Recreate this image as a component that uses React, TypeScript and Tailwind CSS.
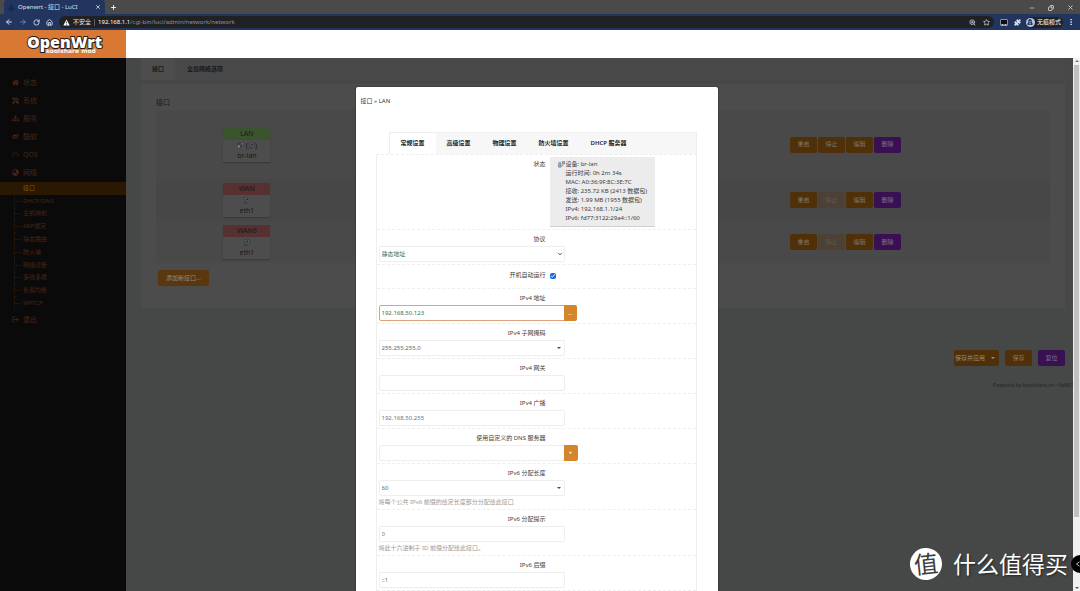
import React from "react";
import {
  ArrowLeft, ArrowRight, RotateCw, House, X, Plus, Minus, Copy, Star, ZoomIn,
  Puzzle, EllipsisVertical, ChevronDown, LogOut, Gauge,
} from "lucide-react";
import { FaHome, FaTools, FaWeibo, FaGlobeAsia, FaSitemap, FaUserSecret } from "react-icons/fa";

const menu = [
  { label: "状态", Icon: FaHome },
  { label: "系统", Icon: FaTools },
  { label: "服务", Icon: FaSitemap },
  { label: "酷软", Icon: FaWeibo },
  { label: "QOS", Icon: Gauge },
  { label: "网络", Icon: FaGlobeAsia },
];

const submenu = ["接口", "DHCP/DNS", "主机映射", "ARP绑定", "静态路由", "防火墙", "网络诊断", "多线多拨", "负载均衡", "MPTCP"];

const interfaces = [
  { name: "LAN", device: "br-lan", up: true },
  { name: "WAN", device: "eth1", up: false },
  { name: "WAN6", device: "eth1", up: false },
];

function BridgeIcon({ className = "" }: { className?: string }) {
  return (
    <svg viewBox="0 0 16 16" className={`inline-block size-[7px] ${className}`} aria-hidden="true">
      <rect x="1" y="6" width="6" height="8" rx="1" fill="#9fb0c4" stroke="currentColor" strokeWidth="1.5" />
      <rect x="10" y="1" width="5" height="6" rx="1" fill="#9fb0c4" stroke="currentColor" strokeWidth="1.5" />
      <path d="M1 3h6M8 11l4-1" stroke="currentColor" strokeWidth="1.5" />
    </svg>
  );
}

function PortIcon() {
  return (
    <svg viewBox="0 0 16 16" className="inline-block size-[7px]" aria-hidden="true">
      <rect x="4" y="1" width="11" height="10" fill="#585858" stroke="#3c3c3c" strokeWidth="1.2" />
      <path d="M1 14h9" stroke="#2c3a58" strokeWidth="2.5" />
      <path d="M3 11l5-5" stroke="#3a4456" strokeWidth="2" />
      <rect x="8" y="4" width="3" height="3" fill="#1c1c1c" />
    </svg>
  );
}

function Browser() {
  return (
    <header className="shrink-0">
      <div className="flex h-[14px] items-end justify-between bg-[#4a4a4a]">
        <div className="flex items-center">
          <div className="ml-1 flex h-[14px] w-[101px] items-center rounded-t-[3px] bg-[#22355f] pl-1 pr-1 text-[6px] text-[#dfe5f0]">
            <svg viewBox="0 0 16 16" className="mr-[3px] size-[7px]" aria-hidden="true">
              <path d="M3 9h10v4H3zM8 9V5M5 4q3-3 6 0" stroke="#111c33" strokeWidth="1.6" fill="none" />
            </svg>
            <span className="flex-1 whitespace-nowrap">Openwrt - 接口 - LuCI</span>
            <button aria-label="关闭标签页"><X className="size-[6px]" strokeWidth={3} /></button>
          </div>
          <button aria-label="新标签页" className="ml-[5px] text-white"><Plus className="size-[7px]" strokeWidth={3} /></button>
        </div>
        <div className="flex h-[13px] items-center gap-[13px] pr-[6px] text-[#e4e4e4]">
          <button aria-label="最小化"><Minus className="size-[6px]" strokeWidth={2.5} /></button>
          <button aria-label="还原"><Copy className="size-[6px] -scale-x-100" strokeWidth={3} /></button>
          <button aria-label="关闭"><X className="size-[7px]" strokeWidth={2.5} /></button>
        </div>
      </div>
      <div className="flex h-4 items-center bg-[#22355f] px-[5px] text-[#d6dced]">
        <div className="flex w-[54px] items-center gap-[6px]">
          <button aria-label="后退"><ArrowLeft className="size-[8px]" strokeWidth={3} /></button>
          <button aria-label="前进" className="text-[#71809f]"><ArrowRight className="size-[8px]" strokeWidth={3} /></button>
          <button aria-label="刷新"><RotateCw className="size-[7px]" strokeWidth={3} /></button>
          <button aria-label="主页"><House className="size-[7px]" strokeWidth={3} /></button>
        </div>
        <div className="flex h-3 flex-1 items-center rounded-full bg-[#202124] pl-1 pr-1 text-[6px]">
          <svg viewBox="0 0 12 12" className="mr-[3px] size-[7px]" aria-hidden="true">
            <path d="M6 1l5.5 10H.5z" fill="#ffffff" /><path d="M6 4.5v3M6 8.5v1.3" stroke="#202124" strokeWidth="1.3" />
          </svg>
          <span className="text-[#e8eaed]">不安全</span>
          <span className="mx-[3px] h-[7px] w-px bg-[#5c5e62]" />
          <span className="flex-1 text-[#8f9398]"><span className="text-white">192.168.1.1</span>/cgi-bin/luci/admin/network/network</span>
          <button aria-label="缩放" className="mr-[7px]"><ZoomIn className="size-[7px]" strokeWidth={2.5} /></button>
          <button aria-label="收藏"><Star className="size-[7px]" strokeWidth={2.5} /></button>
        </div>
        <svg viewBox="0 0 16 14" className="ml-[6px] h-[7px] w-2" aria-hidden="true">
          <rect x="1" y="1" width="14" height="12" rx="1" fill="#0c0f16" stroke="#aab2c2" strokeWidth="1.5" />
          <path d="M3 10h4v3H3zM9 10h4v3H9z" fill="#cbd1dc" />
        </svg>
        <Puzzle className="ml-[6px] size-[7px] fill-current" />
        <div className="ml-[5px] flex h-[11px] items-center rounded-full bg-[#202124] pr-[2px] text-[6px] text-white">
          <span className="mr-[2px] flex size-[9px] items-center justify-center rounded-full bg-[#b6c7ea] text-[#2b3c60]"><FaUserSecret className="size-[6px]" /></span>
          <span className="whitespace-nowrap">无痕模式</span>
        </div>
        <button aria-label="菜单" className="ml-1"><EllipsisVertical className="size-[8px]" strokeWidth={3} /></button>
      </div>
    </header>
  );
}

function Logo() {
  return (
    <svg viewBox="0 0 126 28" className="h-7 w-[126px]" role="img" aria-label="OpenWrt koolshare mod">
      <text x="46" y="23" fontFamily="DejaVu Sans, sans-serif" fontSize="6" fontWeight="700" fill="#fff4ea">koolshare mod</text>
      <text x="27" y="18" fontFamily="Open Sans, sans-serif" fontSize="16" fontWeight="800" fill="#ffffff" stroke="#241a14" strokeWidth="2" strokeLinejoin="round" paintOrder="stroke">OpenWrt</text>
    </svg>
  );
}

function Sidebar() {
  return (
    <nav className="w-[126px] shrink-0 bg-[#0a0a0a] pt-[15px] text-[#482716]">
      <ul className="grid h-[109px] auto-rows-fr text-[7px]">
        {menu.map(({ label, Icon }) => (
          <li key={label} className="flex">
            <a href="#" className="flex items-center pl-3"><Icon className="mr-1 size-[7px]" />{label}</a>
          </li>
        ))}
      </ul>
      <ul className="grid h-32 auto-rows-fr text-[6px]">
        {submenu.map((label, i) => (
          <li key={label} className={i === 0 ? "flex bg-[#2a1803] text-[#795e16]" : "flex"}>
            <a href="#" className="flex flex-1 items-center">
              <span className="ml-[14px] h-full w-px border-l border-dotted border-[#2c1a0c]" />
              <span className="mr-[2px] w-[6px] border-t border-dotted border-[#2c1a0c]" />
              {label}
            </a>
          </li>
        ))}
      </ul>
      <a href="#" className="flex h-[19px] items-center pl-3 text-[7px]"><LogOut className="mr-1 size-[7px]" strokeWidth={3} />退出</a>
    </nav>
  );
}

const dimButton = "h-4 w-[27px] rounded-[2px] bg-[#503009] text-[#857767]";
const dimPurple = "h-4 w-[27px] rounded-[2px] bg-[#391051] text-[#83708d]";
const dimDisabled = "h-4 w-[27px] rounded-[2px] bg-[#4c4136] text-[#64594e]";

function Background() {
  return (
    <main className="min-w-0 flex-1 bg-[#464847] pl-[15px] text-[#1a1a1a]">
      <div className="mr-2 flex h-[22px] items-center bg-[#494949] font-semibold">
        <a href="#" className="flex h-full items-center bg-[#4d4d4d] px-[11px]">接口</a>
        <a href="#" className="px-3">全局网络选项</a>
      </div>
      <section className="mr-2 mt-1 bg-[#4c4c4c] px-[15px] pb-[22px] pt-[13px]">
        <h2 className="h-[13px] text-[7px] leading-[12px]">接口</h2>
        <table className="w-full table-fixed border-collapse">
          <tbody>
            {interfaces.map(({ name, device, up }, i) => (
              <tr key={name} className={i === 1 ? "h-[42px] bg-[#474747]" : i === 0 ? "h-[69px] bg-[#494949]" : "h-[42px] bg-[#494949]"}>
                <td className="w-1/5 py-0 pl-[3px] pr-0">
                  <div className="mx-auto h-[34px] w-[47px] bg-[#4d4d4d] text-center text-[7px] shadow-[0_1px_1px_#3a3a3a]">
                    <div className={up ? "h-3 bg-[#3a552e] leading-[12px]" : "h-3 bg-[#573030] leading-[12px]"}>{name}</div>
                    <div className="flex h-[11px] items-center justify-center">
                      {up ? <><BridgeIcon className="mr-[2px] opacity-60" />(<PortIcon />)</> : <PortIcon />}
                    </div>
                    <div className="leading-[9px]">{device}</div>
                  </div>
                </td>
                <td />
                <td className="w-[260px] p-0">
                  <div className="flex gap-px">
                    <button className={dimButton}>重启</button>
                    <button className={up ? dimButton : dimDisabled} disabled={!up}>停止</button>
                    <button className={dimButton}>编辑</button>
                    <button className={dimPurple}>删除</button>
                  </div>
                </td>
              </tr>
            ))}
          </tbody>
        </table>
        <button className="ml-[2px] mt-[7px] block h-4 w-[51px] rounded-[2px] bg-[#5a370c] text-[#9a8c78]">添加新接口...</button>
      </section>
      <div className="mr-2 mt-[42px] flex justify-end gap-[6px]">
        <button className="flex h-4 w-[45px] items-center justify-between whitespace-nowrap rounded-[2px] bg-[#503009] px-[1px] pr-1 text-[#998b7a]">
          保存并应用<span className="border-x-2 border-t-2 border-x-transparent border-t-current" />
        </button>
        <button className={dimButton}>保存</button>
        <button className={dimPurple}>复位</button>
      </div>
      <footer className="mt-[15px] flex justify-end">
        <p className="whitespace-nowrap text-[5px] font-semibold leading-[9px] text-[#2c2c2c]">Powered by koolshare.cn • fw867</p>
      </footer>
    </main>
  );
}

function Field({ id, label, hint, children }: { id: string; label: string; hint?: string; children: React.ReactNode }) {
  return (
    <div className="border-b border-dashed border-[#efefef] px-[2px] pb-[2px] pt-[5px]">
      <label htmlFor={id} className="block w-[167px] text-right leading-[9px]">{label}</label>
      <div className="mt-[2px] flex">{children}</div>
      {hint && <p className="mt-[2px] leading-[9px] text-[#999999]">{hint}</p>}
    </div>
  );
}

const inputStyle = "h-4 w-[186px] rounded-[2px] border border-[#eeeeee] bg-white px-[2px] text-[#666666] outline-none placeholder:text-[#757575] placeholder:opacity-100";
const sideButton = "-ml-px h-4 rounded-r-[2px] bg-[#d5852b] text-center text-white";

function SelectField({ id, value, chevron = false }: { id: string; value: string; chevron?: boolean }) {
  return (
    <div className="relative">
      <select id={id} defaultValue={value} className={chevron ? "h-4 w-[186px] appearance-none rounded-[2px] border border-[#eeeeee] bg-white px-[2px] text-[#37705b] outline-none" : `${inputStyle} appearance-none`}>
        <option>{value}</option>
      </select>
      {chevron
        ? <ChevronDown className="pointer-events-none absolute right-[2px] top-[5px] size-[6px] text-[#28634e]" strokeWidth={4} />
        : <span className="pointer-events-none absolute right-1 top-[7px] border-x-2 border-t-2 border-x-transparent border-t-[#245c48]" />}
    </div>
  );
}

function Dialog() {
  const tabs = ["常规设置", "高级设置", "物理设置", "防火墙设置", "DHCP 服务器"];
  return (
    <div role="dialog" aria-label="接口 » LAN" className="min-h-full w-[362px] rounded-t-[2px] bg-white pl-[5px] pr-[21px] pt-[10px] text-[#3c3c3c] shadow-[0_0_2px_#222222]">
      <h1 className="leading-[9px] text-[#333333]">接口 » LAN</h1>
      <div className="ml-[28px] mt-[26px] flex h-[22px] border border-b-0 border-[#eeeeee] bg-[#f7f7f7] font-semibold text-[#222222]">
        {tabs.map((tab, i) => (
          <button key={tab} className={i === 0 ? "whitespace-nowrap bg-white px-[11px]" : "whitespace-nowrap px-[11px]"}>{tab}</button>
        ))}
      </div>
      <form className="ml-[15px] border-x border-t border-dashed border-[#eeeeee] [border-left-style:solid] [border-right-style:solid]">
        <div className="flex border-b border-dashed border-[#efefef] pb-[2px] pl-[2px] pt-[2px]">
          <span className="w-[167px] pt-[3px] text-right leading-[9px]">状态</span>
          <div className="ml-1 flex h-[70px] w-[105px] border-b border-[#cfcfcf] bg-[#ececec] pl-2 pt-[3px] leading-[9px]">
            <BridgeIcon className="mr-px mt-px shrink-0 text-[#66707c]" />
            <p className="whitespace-nowrap">
              设备: br-lan<br />运行时间: 0h 2m 34s<br />MAC: A0:36:9F:8C:3E:7C<br />接收: 235.72 KB (2413 数据包)<br />
              发送: 1.99 MB (1955 数据包)<br />IPv4: 192.168.1.1/24<br />IPv6: fd77:3122:29a4::1/60
            </p>
          </div>
        </div>
        <Field id="proto" label="协议"><SelectField id="proto" value="静态地址" chevron /></Field>
        <div className="flex h-6 items-center border-b border-dashed border-[#efefef] pb-[2px] pl-[2px]">
          <label htmlFor="auto" className="w-[167px] text-right">开机自动运行</label>
          <input id="auto" type="checkbox" defaultChecked className="ml-1 size-[6px] accent-[#1a66e8]" />
        </div>
        <Field id="ipaddr" label="IPv4 地址">
          <input id="ipaddr" defaultValue="192.168.50.123" className="h-4 w-[186px] rounded-l-[2px] border border-[#e0a27c] bg-white px-[2px] text-[#37705b] outline-none" />
          <button type="button" className={`${sideButton} w-[13px]`}>...</button>
        </Field>
        <Field id="netmask" label="IPv4 子网掩码"><SelectField id="netmask" value="255.255.255.0" /></Field>
        <Field id="gateway" label="IPv4 网关"><input id="gateway" className={inputStyle} /></Field>
        <Field id="broadcast" label="IPv4 广播"><input id="broadcast" placeholder="192.168.50.255" className={inputStyle} /></Field>
        <Field id="dns" label="使用自定义的 DNS 服务器">
          <input id="dns" className={inputStyle} />
          <button type="button" className={`${sideButton} w-[14px] font-bold`}>+</button>
        </Field>
        <Field id="assign" label="IPv6 分配长度" hint="将每个公共 IPv6 前缀的给定长度部分分配给此接口"><SelectField id="assign" value="60" /></Field>
        <Field id="hint" label="IPv6 分配提示" hint="将此十六进制子 ID 前缀分配给此接口。"><input id="hint" placeholder="0" className={inputStyle} /></Field>
        <Field id="suffix" label="IPv6 后缀"><input id="suffix" placeholder="::1" className={inputStyle} /></Field>
      </form>
    </div>
  );
}

export default function App() {
  return (
    <div className="relative flex h-screen flex-col overflow-hidden bg-white font-['Noto_Sans','Noto_Sans_CJK_SC',sans-serif] text-[6px] leading-[9px]">
      <Browser />
      <div className="flex h-7 shrink-0 bg-white">
        <div className="w-[126px] bg-[#d97833]"><Logo /></div>
      </div>
      <div className="flex min-h-0 flex-1">
        <div className="relative flex min-w-0 flex-1 overflow-hidden">
          <Sidebar />
          <Background />
          <div className="absolute inset-0 flex justify-center overflow-hidden pt-[29px]"><Dialog /></div>
        </div>
        <div className="flex w-[7px] shrink-0 flex-col items-center justify-between bg-[#f1f1f1] py-[2px]">
          <span className="border-x-2 border-b-2 border-x-transparent border-b-[#777777]" />
          <span className="mb-[70px] mt-[3px] w-[5px] flex-1 bg-[#c1c1c1]" />
          <span className="border-x-2 border-t-2 border-x-transparent border-t-[#555555]" />
        </div>
      </div>
      <div className="absolute bottom-[11px] right-3 flex items-center gap-[11px] text-white">
        <span className="flex size-8 -rotate-6 items-center justify-center rounded-full bg-white text-2xl leading-none text-[#3c3c3c]">值</span>
        <span className="whitespace-nowrap text-[23px] leading-8 [text-shadow:1px_1px_2px_#222222]">什么值得买</span>
      </div>
      <button aria-label="展开" className="absolute -right-[9px] bottom-[18px] flex size-[18px] items-center rounded-full bg-black pl-1 text-white">
        <svg viewBox="0 0 8 8" className="size-[6px]" aria-hidden="true"><path d="M6 1L2 4l4 3" fill="none" stroke="currentColor" /></svg>
      </button>
    </div>
  );
}
